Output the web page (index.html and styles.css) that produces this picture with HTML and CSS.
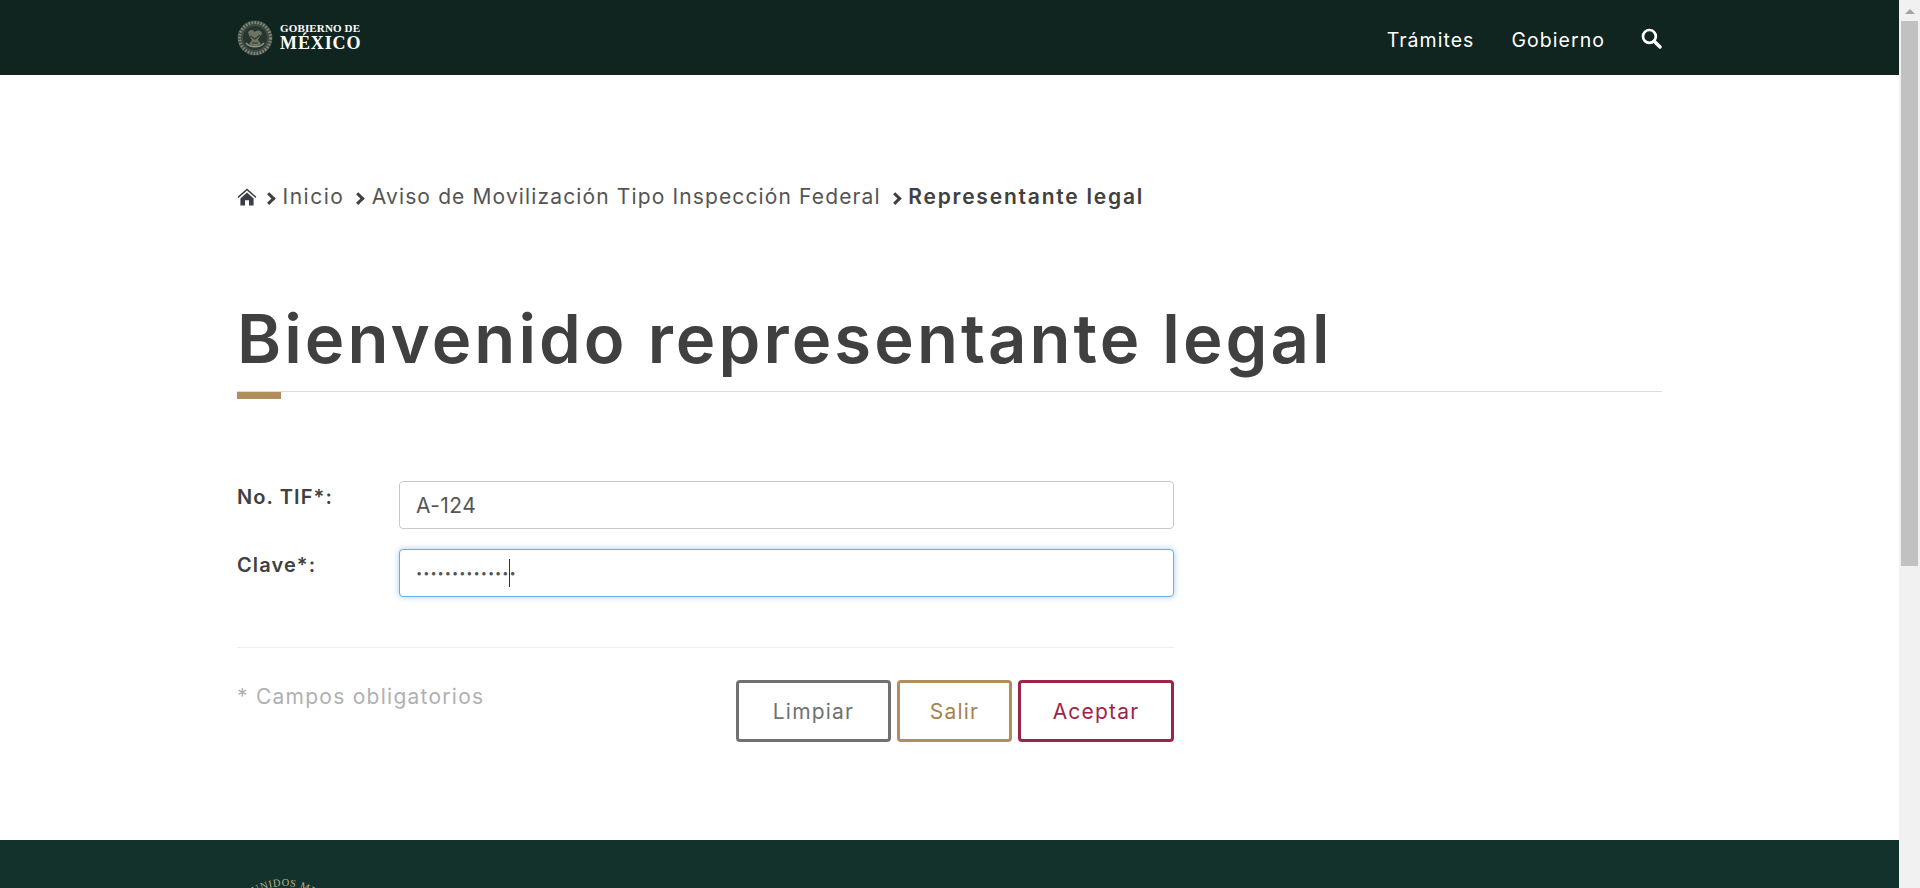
FILE: index.html
```html
<!DOCTYPE html>
<html lang="es">
<head>
    <meta charset="UTF-8">
    <meta name="viewport" content="width=device-width, initial-scale=1.0">
    <title>Representante legal</title>
    <link rel="stylesheet" href="styles.css">
</head>
<body>
    <div class="page">
        <header class="topbar">
            <div class="container topbar-inner">
                <a class="brand" href="#">
                    <svg class="brand-seal" width="36" height="36" viewBox="0 0 36 36">
                        <circle cx="18" cy="18" r="17.5" fill="#3f4c42"/>
                        <circle cx="18" cy="18" r="15.5" fill="none" stroke="#83877a" stroke-width="3" stroke-dasharray="1.6 1.4"/>
                        <circle cx="18" cy="18" r="12" fill="#26362f"/>
                        <path d="M11 12c3-3 5-2 7 0 2-2 5-2 7 1-1 3-3 4-4 7l3 4-6 3-6-3 3-4c-2-2-3-4-4-8z" fill="#6d7365"/>
                        <path d="M14 9h8M13 16l5 3 5-4M15 23h6" fill="none" stroke="#2b3a32" stroke-width="1.2"/>
                        <path d="M9 23c4 5 14 5 18 0" fill="none" stroke="#8f9180" stroke-width="1.5"/>
                    </svg>
                    <span class="brand-text">
                        <span class="brand-small">GOBIERNO DE</span>
                        <span class="brand-big">MÉXICO</span>
                    </span>
                </a>
                <nav class="topnav">
                    <a href="#">Trámites</a>
                    <a href="#">Gobierno</a>
                    <a href="#" class="search-link" aria-label="Buscar">
                        <svg width="21" height="21" viewBox="0 0 21 21">
                            <circle cx="8.4" cy="8.4" r="6.4" fill="none" stroke="#fff" stroke-width="2.7"/>
                            <path d="M13.2 13.2l5.8 5.8" stroke="#fff" stroke-width="3.4" stroke-linecap="round"/>
                        </svg>
                    </a>
                </nav>
            </div>
        </header>

        <main class="container content">
            <ol class="breadcrumb">
                <li>
                    <svg class="home-icon" width="20" height="18" viewBox="0 0 20 18">
                        <path d="M10 .6L.6 8.8l.9 1.1L10 2.6l8.5 7.3.9-1.1z" fill="#3a3f45"/>
                        <path d="M3.4 10.4L10 4.6l6.6 5.8V17.4h-4.6v-5.2H8v5.2H3.4z" fill="#3a3f45"/>
                    </svg>
                </li>
                <li class="crumb-home"><a href="#">Inicio</a></li>
                <li><a href="#">Aviso de Movilización Tipo Inspección Federal</a></li>
                <li class="current">Representante legal</li>
            </ol>

            <h1 class="page-title">Bienvenido representante legal</h1>
            <div class="title-rule"><span></span></div>

            <form class="login-form">
                <div class="form-row">
                    <label for="tif">No. TIF*:</label>
                    <input id="tif" class="field" type="text" value="A-124">
                </div>
                <div class="form-row">
                    <label for="clave">Clave*:</label>
                    <div class="field-wrap">
                        <input id="clave" class="field field-focus field-pass" type="password" value="12345678901234">
                        <span class="caret"></span>
                    </div>
                </div>
                <hr class="form-sep">
                <div class="form-actions">
                    <p class="required-note">* Campos obligatorios</p>
                    <div class="buttons">
                        <button type="button" class="btn btn-gray">Limpiar</button>
                        <button type="button" class="btn btn-gold">Salir</button>
                        <button type="button" class="btn btn-red">Aceptar</button>
                    </div>
                </div>
            </form>
        </main>

        <footer class="footer">
            <div class="container">
                <svg class="footer-seal" width="100" height="11" viewBox="0 0 100 11">
                    <defs>
                        <path id="seal-arc" d="M46 121a56 56 0 1 1 .01 0"/>
                    </defs>
                    <text class="seal-text"><textPath href="#seal-arc" startOffset="50%" text-anchor="middle">ESTADOS UNIDOS MEXICANOS</textPath></text>
                </svg>
            </div>
        </footer>
    </div>

    <div class="scrollbar">
        <span class="scroll-arrow"></span>
        <span class="scroll-thumb"></span>
    </div>
</body>
</html>
```

FILE: styles.css
```css
html, body {
    height: 100%;
    margin: 0;
    overflow: hidden;
}
body {
    display: flex;
    font-family: Inter, "Open Sans", sans-serif;
    color: #404041;
    background-color: #fff;
}
a {
    color: inherit;
    text-decoration: none;
}
.page {
    flex: 1;
    height: 888px;
    display: flex;
    flex-direction: column;
    overflow: hidden;
}
.container {
    width: 1425px;
    margin: 0 auto;
}

/* top bar */
.topbar {
    height: 75px;
    flex: none;
    background-color: #10251f;
    color: #fff;
}
.topbar-inner {
    height: 100%;
    display: flex;
    align-items: center;
    justify-content: space-between;
}
.brand {
    display: flex;
    align-items: center;
    gap: 7px;
}
.brand-text {
    display: flex;
    flex-direction: column;
    font-family: "Liberation Serif", serif;
    font-weight: bold;
    line-height: 1;
}
.brand-small {
    font-size: 11px;
    letter-spacing: 0.15px;
}
.brand-big {
    font-size: 18px;
    letter-spacing: 0.9px;
}
.topnav {
    display: flex;
    align-items: center;
    gap: 37px;
    padding-top: 4px;
    font-size: 19.5px;
    letter-spacing: 1.05px;
}
.search-link {
    display: flex;
    margin: -3px 0 0 -1px;
}

/* breadcrumb */
.breadcrumb {
    display: flex;
    align-items: center;
    margin: 109px 0 0;
    padding: 0;
    list-style: none;
    font-size: 21px;
    line-height: 26px;
    letter-spacing: 1.13px;
    color: #545454;
}
.breadcrumb li + li::before {
    content: "";
    display: inline-block;
    width: 5.5px;
    height: 5.5px;
    margin: 0 9px 2px 10px;
    border-top: 3px solid #404041;
    border-right: 3px solid #404041;
    transform: rotate(45deg);
}
.breadcrumb li.crumb-home::before {
    margin-left: 8px;
}
.crumb-home {
    letter-spacing: 1.5px;
}
.breadcrumb .current {
    font-weight: 600;
    letter-spacing: 1.78px;
    color: #404041;
}
.home-icon {
    display: block;
}

/* title */
.page-title {
    margin: 89px 0 0;
    font-size: 67px;
    line-height: 80px;
    font-weight: 600;
    letter-spacing: 3.07px;
    color: #404041;
}
.title-rule {
    margin-top: 12px;
    border-top: 1px solid #dcdcdc;
}
.title-rule span {
    display: block;
    width: 44px;
    height: 7px;
    background-color: #b38e5d;
}

/* form */
.login-form {
    width: 937px;
    margin-top: 82px;
}
.form-row {
    display: flex;
    margin-bottom: 20px;
}
.form-row label {
    width: 162px;
    flex: none;
    padding-top: 3px;
    font-size: 20px;
    line-height: 26px;
    font-weight: 600;
    letter-spacing: 1.1px;
}
.field-wrap {
    flex: 1;
    display: flex;
    position: relative;
}
.field {
    flex: 1;
    box-sizing: border-box;
    height: 48px;
    padding: 0 16px;
    border: 1px solid #c8c8c8;
    border-radius: 4px;
    outline: none;
    font-family: inherit;
    font-size: 21px;
    letter-spacing: 0.42px;
    color: #555;
}
.field-focus {
    border-color: #66afe9;
    box-shadow: 0 0 6px rgba(102, 175, 233, 0.6);
}
.field-pass {
    font-size: 11px;
    letter-spacing: 1px;
}
.caret {
    position: absolute;
    left: 110px;
    top: 10px;
    width: 1px;
    height: 28px;
    background-color: #333;
}
.form-sep {
    margin: 50px -1px 32px 0;
    border: 0;
    border-top: 1px solid #eee;
}
.form-actions {
    display: flex;
    justify-content: space-between;
    align-items: flex-start;
}
.required-note {
    margin: 4px 0 0;
    font-size: 21px;
    line-height: 26px;
    letter-spacing: 1.26px;
    color: #b0b0b0;
}
.buttons {
    display: flex;
    gap: 6px;
}
.btn {
    box-sizing: border-box;
    height: 62px;
    padding: 0;
    border: 3px solid;
    border-radius: 4px;
    background-color: #fff;
    font-family: inherit;
    font-size: 21px;
    letter-spacing: 1.2px;
}
.btn-gray {
    width: 155px;
    border-color: #6f7271;
    color: #6f7271;
}
.btn-gold {
    width: 115px;
    border-color: #b38e5d;
    color: #a5814f;
}
.btn-red {
    width: 156px;
    border-color: #9d2449;
    color: #9d2449;
}

/* footer */
.footer {
    margin-top: auto;
    height: 48px;
    flex: none;
    padding-top: 37px;
    box-sizing: border-box;
    background-color: #13322b;
}
.footer-seal {
    display: block;
}
.seal-text {
    font-family: "Liberation Serif", serif;
    font-size: 10.5px;
    letter-spacing: 0.6px;
    fill: #bdb08e;
}

/* scrollbar of the window */
.scrollbar {
    width: 21px;
    height: 888px;
    flex: none;
    display: flex;
    flex-direction: column;
    align-items: center;
    background-color: #f1f1f1;
}
.scroll-arrow {
    width: 0;
    height: 0;
    margin: 9px 0 7px;
    border-left: 5px solid transparent;
    border-right: 5px solid transparent;
    border-bottom: 5px solid #a3a3a3;
}
.scroll-thumb {
    width: 17px;
    height: 545px;
    background-color: #c1c1c1;
}
```
